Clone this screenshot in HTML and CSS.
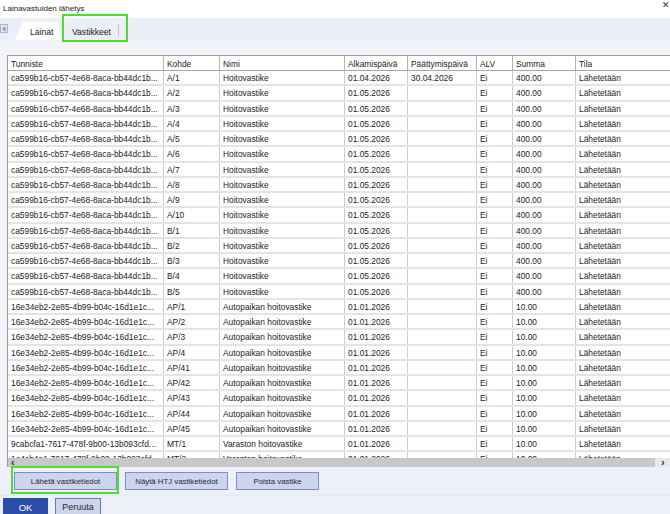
FILE: index.html
```html
<!DOCTYPE html>
<html lang="fi">
<head>
<meta charset="utf-8">
<title>Lainavastuiden lähetys</title>
<link rel="stylesheet" href="styles.css">
</head>
<body>
<div class="window">
  <div class="titlebar">
    <span class="title">Lainavastuiden lähetys</span>
    <span class="close">&#x2715;</span>
  </div>
  <div class="tabbar">
    <div class="tab-scroll"><svg width="6" height="6" viewBox="0 0 6 6"><path d="M4.5 0.5 L1 3 L4.5 5.5 Z" fill="#8c93a8"/></svg></div>
    <div class="tab active">Lainat</div>
    <div class="tab">Vastikkeet</div>
    <div class="tab-sep"></div>
  </div>
  <div class="content">
    <div class="grid-wrap">
      <div class="grid">
        <div class="row head"><div>Tunniste</div><div>Kohde</div><div>Nimi</div><div>Alkamispäivä</div><div>Päättymispäivä</div><div>ALV</div><div>Summa</div><div>Tila</div></div>
        <div class="row"><div>ca599b16-cb57-4e68-8aca-bb44dc1b...</div><div>A/1</div><div>Hoitovastike</div><div>01.04.2026</div><div>30.04.2026</div><div>Ei</div><div>400.00</div><div>Lähetetään</div></div>
        <div class="row"><div>ca599b16-cb57-4e68-8aca-bb44dc1b...</div><div>A/2</div><div>Hoitovastike</div><div>01.05.2026</div><div></div><div>Ei</div><div>400.00</div><div>Lähetetään</div></div>
        <div class="row"><div>ca599b16-cb57-4e68-8aca-bb44dc1b...</div><div>A/3</div><div>Hoitovastike</div><div>01.05.2026</div><div></div><div>Ei</div><div>400.00</div><div>Lähetetään</div></div>
        <div class="row"><div>ca599b16-cb57-4e68-8aca-bb44dc1b...</div><div>A/4</div><div>Hoitovastike</div><div>01.05.2026</div><div></div><div>Ei</div><div>400.00</div><div>Lähetetään</div></div>
        <div class="row"><div>ca599b16-cb57-4e68-8aca-bb44dc1b...</div><div>A/5</div><div>Hoitovastike</div><div>01.05.2026</div><div></div><div>Ei</div><div>400.00</div><div>Lähetetään</div></div>
        <div class="row"><div>ca599b16-cb57-4e68-8aca-bb44dc1b...</div><div>A/6</div><div>Hoitovastike</div><div>01.05.2026</div><div></div><div>Ei</div><div>400.00</div><div>Lähetetään</div></div>
        <div class="row"><div>ca599b16-cb57-4e68-8aca-bb44dc1b...</div><div>A/7</div><div>Hoitovastike</div><div>01.05.2026</div><div></div><div>Ei</div><div>400.00</div><div>Lähetetään</div></div>
        <div class="row"><div>ca599b16-cb57-4e68-8aca-bb44dc1b...</div><div>A/8</div><div>Hoitovastike</div><div>01.05.2026</div><div></div><div>Ei</div><div>400.00</div><div>Lähetetään</div></div>
        <div class="row"><div>ca599b16-cb57-4e68-8aca-bb44dc1b...</div><div>A/9</div><div>Hoitovastike</div><div>01.05.2026</div><div></div><div>Ei</div><div>400.00</div><div>Lähetetään</div></div>
        <div class="row"><div>ca599b16-cb57-4e68-8aca-bb44dc1b...</div><div>A/10</div><div>Hoitovastike</div><div>01.05.2026</div><div></div><div>Ei</div><div>400.00</div><div>Lähetetään</div></div>
        <div class="row"><div>ca599b16-cb57-4e68-8aca-bb44dc1b...</div><div>B/1</div><div>Hoitovastike</div><div>01.05.2026</div><div></div><div>Ei</div><div>400.00</div><div>Lähetetään</div></div>
        <div class="row"><div>ca599b16-cb57-4e68-8aca-bb44dc1b...</div><div>B/2</div><div>Hoitovastike</div><div>01.05.2026</div><div></div><div>Ei</div><div>400.00</div><div>Lähetetään</div></div>
        <div class="row"><div>ca599b16-cb57-4e68-8aca-bb44dc1b...</div><div>B/3</div><div>Hoitovastike</div><div>01.05.2026</div><div></div><div>Ei</div><div>400.00</div><div>Lähetetään</div></div>
        <div class="row"><div>ca599b16-cb57-4e68-8aca-bb44dc1b...</div><div>B/4</div><div>Hoitovastike</div><div>01.05.2026</div><div></div><div>Ei</div><div>400.00</div><div>Lähetetään</div></div>
        <div class="row"><div>ca599b16-cb57-4e68-8aca-bb44dc1b...</div><div>B/5</div><div>Hoitovastike</div><div>01.05.2026</div><div></div><div>Ei</div><div>400.00</div><div>Lähetetään</div></div>
        <div class="row"><div>16e34eb2-2e85-4b99-b04c-16d1e1c...</div><div>AP/1</div><div>Autopaikan hoitovastike</div><div>01.01.2026</div><div></div><div>Ei</div><div>10.00</div><div>Lähetetään</div></div>
        <div class="row"><div>16e34eb2-2e85-4b99-b04c-16d1e1c...</div><div>AP/2</div><div>Autopaikan hoitovastike</div><div>01.01.2026</div><div></div><div>Ei</div><div>10.00</div><div>Lähetetään</div></div>
        <div class="row"><div>16e34eb2-2e85-4b99-b04c-16d1e1c...</div><div>AP/3</div><div>Autopaikan hoitovastike</div><div>01.01.2026</div><div></div><div>Ei</div><div>10.00</div><div>Lähetetään</div></div>
        <div class="row"><div>16e34eb2-2e85-4b99-b04c-16d1e1c...</div><div>AP/4</div><div>Autopaikan hoitovastike</div><div>01.01.2026</div><div></div><div>Ei</div><div>10.00</div><div>Lähetetään</div></div>
        <div class="row"><div>16e34eb2-2e85-4b99-b04c-16d1e1c...</div><div>AP/41</div><div>Autopaikan hoitovastike</div><div>01.01.2026</div><div></div><div>Ei</div><div>10.00</div><div>Lähetetään</div></div>
        <div class="row"><div>16e34eb2-2e85-4b99-b04c-16d1e1c...</div><div>AP/42</div><div>Autopaikan hoitovastike</div><div>01.01.2026</div><div></div><div>Ei</div><div>10.00</div><div>Lähetetään</div></div>
        <div class="row"><div>16e34eb2-2e85-4b99-b04c-16d1e1c...</div><div>AP/43</div><div>Autopaikan hoitovastike</div><div>01.01.2026</div><div></div><div>Ei</div><div>10.00</div><div>Lähetetään</div></div>
        <div class="row"><div>16e34eb2-2e85-4b99-b04c-16d1e1c...</div><div>AP/44</div><div>Autopaikan hoitovastike</div><div>01.01.2026</div><div></div><div>Ei</div><div>10.00</div><div>Lähetetään</div></div>
        <div class="row"><div>16e34eb2-2e85-4b99-b04c-16d1e1c...</div><div>AP/45</div><div>Autopaikan hoitovastike</div><div>01.01.2026</div><div></div><div>Ei</div><div>10.00</div><div>Lähetetään</div></div>
        <div class="row"><div>9cabcfa1-7617-478f-9b00-13b093cfd...</div><div>MT/1</div><div>Varaston hoitovastike</div><div>01.01.2026</div><div></div><div>Ei</div><div>10.00</div><div>Lähetetään</div></div>
        <div class="row"><div>1e4cb4a1-7617-478f-9b00-13b093cfd...</div><div>MT/2</div><div>Varaston hoitovastike</div><div>01.01.2026</div><div></div><div>Ei</div><div>10.00</div><div>Lähetetään</div></div>
      </div>
      <div class="hscroll">
        <span class="arrow">&lsaquo;</span>
        <div class="track"></div>
        <span class="arrow right">&rsaquo;</span>
      </div>
    </div>
  </div>
  <div class="actions">
    <button class="btn w1">Lähetä vastiketiedot</button>
    <button class="btn w1">Näytä HTJ vastiketiedot</button>
    <button class="btn w2">Poista vastike</button>
  </div>
  <div class="footer">
    <button class="btn primary">OK</button>
    <button class="btn cancel">Peruuta</button>
  </div>
  <div class="hl hl-tab"></div>
  <div class="hl hl-btn"></div>
</div>
</body>
</html>
```
FILE: styles.css
```css
* { box-sizing: border-box; }
html, body { margin: 0; padding: 0; }
body {
  width: 670px;
  height: 514px;
  overflow: hidden;
  font-family: "Liberation Sans", Arial, sans-serif;
  color: #1c1c1c;
  background: #eef0f9;
}
.window {
  position: relative;
  width: 670px;
  height: 514px;
  display: flex;
  flex-direction: column;
}
.titlebar {
  height: 18px;
  flex: none;
  background: #ffffff;
  display: flex;
  justify-content: space-between;
  align-items: center;
  padding: 0 0 2px 3px;
  font-size: 8px;
}
.close {
  font-size: 9px;
  color: #333;
  margin-top: -6px;
}
.tabbar {
  height: 22px;
  flex: none;
  background: #eceef8;
  display: flex;
  align-items: flex-end;
  font-size: 8.6px;
}
.tab-scroll {
  width: 8px;
  height: 9px;
  margin-bottom: 7px;
  border: 1px solid #a9b3d6;
  background: #dfe4f3;
  display: flex;
  align-items: center;
  justify-content: center;
}
.tab {
  height: 18px;
  display: flex;
  align-items: center;
  padding-top: 1px;
}
.tab.active {
  margin-left: 7px;
  width: 47px;
  padding-left: 15px;
  background: #ffffff;
  clip-path: polygon(8px 0, calc(100% - 5px) 0, 100% 100%, 0 100%);
}
.tab:not(.active) {
  width: 56px;
  padding-left: 10px;
}
.tab-sep {
  width: 1px;
  height: 12px;
  margin-bottom: 4px;
  background: #c4c6cf;
}
.content {
  flex: none;
  background: #f3f4fa;
  padding: 15px 0 0 7px;
}
.grid-wrap {
  height: 412px;
  border-left: 1px solid #9c9c9c;
  border-top: 1px solid #9c9c9c;
  background: #ffffff;
  overflow: hidden;
  display: flex;
  flex-direction: column;
}
.grid {
  height: 402px;
  flex: none;
  overflow: hidden;
}
.row {
  display: grid;
  grid-template-columns: 156px 56px 125px 63px 69px 36px 63px 120px;
  height: 15.25px;
  border-bottom: 2px solid #e3e3ec;
  font-size: 8.4px;
  line-height: 13px;
}
.row > div {
  border-right: 1px solid #cbcbe0;
  padding: 1px 0 0 3px;
  white-space: nowrap;
  overflow: hidden;
}
.row.head {
  height: 15px;
  border-bottom: 1px solid #a8a8a8;
  line-height: 14px;
}
.row.head > div {
  border-right-color: #b4b4b8;
}
.hscroll {
  height: 9px;
  flex: none;
  background: #c8c8ca;
  display: flex;
  align-items: center;
  font-size: 11px;
  font-weight: bold;
  line-height: 9px;
  color: #333;
}
.hscroll .arrow {
  width: 10px;
  height: 9px;
  padding-left: 3px;
  flex: none;
}
.hscroll .arrow.right {
  width: 15px;
  padding-left: 6px;
  background: #e9e9eb;
}
.track {
  flex: 1;
  height: 9px;
}
.actions {
  height: 29px;
  flex: none;
  display: flex;
  gap: 8px;
  padding: 5px 0 0 14px;
  border-bottom: 1px solid #e6e8f2;
}
.btn {
  height: 18px;
  margin: 0;
  padding: 0;
  font-family: "Liberation Sans", Arial, sans-serif;
  font-size: 7.8px;
  color: #2a2a2a;
  background: #ccd4ee;
  border: 1px solid #7d8bc6;
  border-radius: 0;
}
.btn.w1 { width: 103px; }
.btn.w2 { width: 83px; }
.footer {
  flex: none;
  display: flex;
  gap: 7px;
  padding: 2px 0 0 3px;
}
.btn.primary {
  width: 45px;
  background: #2d4ea6;
  border-color: #2d4ea6;
  color: #ffffff;
  font-size: 9.5px;
}
.btn.cancel {
  width: 46px;
  font-size: 9px;
  border-color: #6878bc;
}
.hl {
  position: absolute;
  border: 2px solid #4cdf2c;
  pointer-events: none;
}
.hl-tab {
  left: 62px;
  top: 14px;
  width: 66px;
  height: 28px;
}
.hl-btn {
  left: 11px;
  top: 466px;
  width: 108px;
  height: 28px;
}
```
